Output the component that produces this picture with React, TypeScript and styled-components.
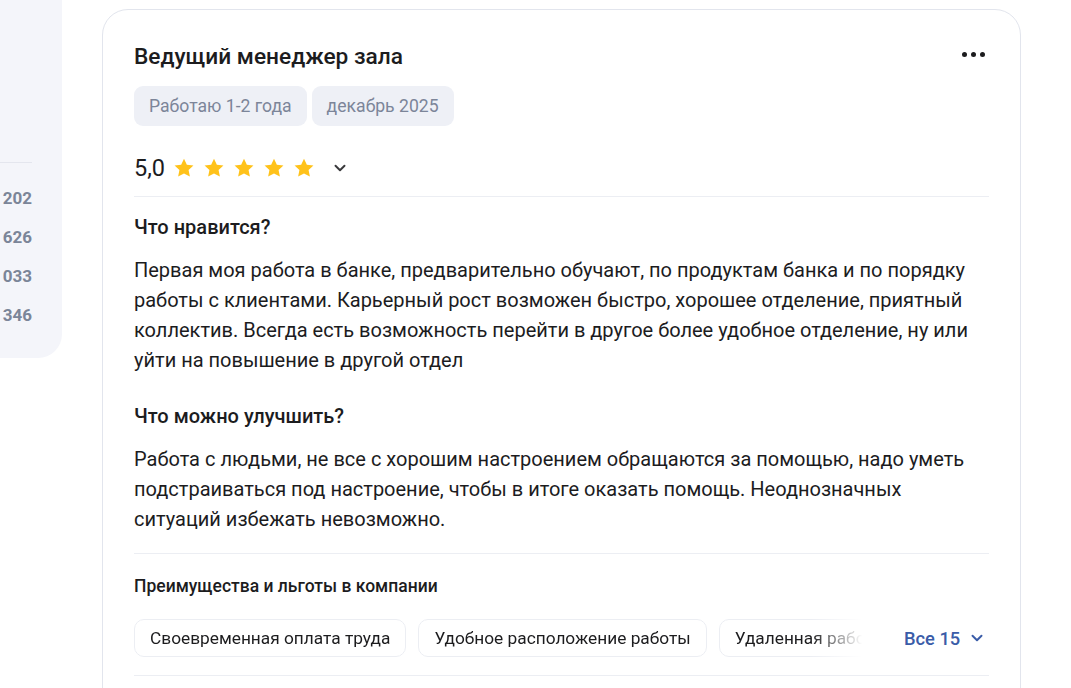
import React from "react";
import styled, { createGlobalStyle } from "styled-components";

const GlobalStyle = createGlobalStyle`
  html, body {
    margin: 0;
    padding: 0;
    background: #fff;
    font-family: Roboto, "Noto Sans", Arial, sans-serif;
    color: #1c1c1e;
    overflow: hidden;
  }
  * { box-sizing: border-box; }
`;

const Page = styled.div`
  display: flex;
  align-items: flex-start;
  width: 1071px;
  height: 688px;
  overflow: hidden;
`;

const SidePanel = styled.div`
  width: 62px;
  flex-shrink: 0;
  margin-top: -24px;
  height: 382px;
  background: #f4f5fa;
  border-radius: 0 24px 24px 0;
  padding: 186px 30px 0 0;
`;

const SideDivider = styled.div`
  height: 1px;
  background: #e4e6ee;
  margin-bottom: 25px;
`;

const SideRow = styled.div`
  display: flex;
  justify-content: flex-end;
  font-size: 17px;
  line-height: 20px;
  font-weight: 700;
  color: #7b8598;
  margin-bottom: 19px;
`;

const Card = styled.div`
  margin-left: 40px;
  margin-top: 9px;
  width: 919px;
  height: 720px;
  border: 1px solid #e2e5ed;
  border-radius: 26px;
  padding: 33px 31px 0 31px;
`;

const HeaderRow = styled.div`
  display: flex;
  align-items: center;
  justify-content: space-between;
  height: 28px;
`;

const Title = styled.h2`
  margin: 0;
  font-size: 22.7px;
  line-height: 28px;
  font-weight: 500;
  color: #1c1c1e;
`;

const MoreButton = styled.div`
  display: flex;
  gap: 4px;
  margin-right: 4px;
  margin-top: -6px;
  span {
    width: 5px;
    height: 5px;
    border-radius: 50%;
    background: #1c1c1e;
  }
`;

const Tags = styled.div`
  display: flex;
  gap: 5px;
  margin-top: 15px;
`;

const Tag = styled.div`
  height: 40px;
  padding: 0 15px;
  border-radius: 9px;
  background: #eef0f6;
  color: #7c8599;
  font-size: 17.6px;
  display: flex;
  align-items: center;
`;

const RatingRow = styled.div`
  display: flex;
  align-items: center;
  height: 36px;
  margin-top: 24px;
`;

const Score = styled.span`
  font-size: 23.5px;
  font-weight: 400;
  margin-right: 8px;
`;

const Stars = styled.div`
  display: flex;
  gap: 8px;
`;

const Divider = styled.div<{ $top: number }>`
  height: 1px;
  background: #eceef3;
  margin-top: ${(p) => p.$top}px;
`;

const SectionTitle = styled.h3<{ $top: number }>`
  margin: ${(p) => p.$top}px 0 0 0;
  font-size: 20px;
  line-height: 24px;
  font-weight: 500;
`;

const Text = styled.p`
  margin: 16px 0 0 0;
  font-size: 20px;
  line-height: 30px;
  color: #1c1c1e;
`;

const BenefitsTitle = styled.h4`
  margin: 21px 0 0 0;
  font-size: 17.5px;
  line-height: 22px;
  font-weight: 500;
`;

const BenefitsRow = styled.div`
  display: flex;
  align-items: center;
  margin-top: 22px;
`;

const BenefitsTrack = styled.div`
  display: flex;
  flex: 0 0 728px;
  gap: 12px;
  overflow: hidden;
  mask-image: linear-gradient(to right, #000 93%, transparent 100%);
  -webkit-mask-image: linear-gradient(to right, #000 93%, transparent 100%);
`;

const Benefit = styled.div`
  flex-shrink: 0;
  height: 38px;
  padding: 0 15px;
  border: 1px solid #eceef3;
  border-radius: 10px;
  display: flex;
  align-items: center;
  font-size: 17.3px;
  color: #1c1c1e;
  white-space: nowrap;
`;

const ShowAll = styled.div`
  display: flex;
  flex-shrink: 0;
  align-items: center;
  gap: 8px;
  margin-left: 42px;
  color: #3a5ca8;
  font-size: 18.3px;
  font-weight: 500;
  white-space: nowrap;
`;

const ChevronWrap = styled.span`
  display: flex;
  margin-left: 16px;
`;

const Star = () => (
  <svg width="22" height="22" viewBox="0 0 24 24">
    <path
      d="M12 1.8l3.1 6.6 7.2.9-5.3 5 1.4 7.1L12 17.9l-6.4 3.5 1.4-7.1-5.3-5 7.2-.9z"
      fill="#ffc21a"
    />
  </svg>
);

const Chevron = ({ color, size }: { color: string; size: number }) => (
  <svg width={size} height={size} viewBox="0 0 24 24" fill="none">
    <path d="M6 9l6 6 6-6" stroke={color} strokeWidth="2.6" strokeLinecap="round" strokeLinejoin="round" />
  </svg>
);

const sideNumbers = ["202", "626", "033", "346"];
const benefits = ["Своевременная оплата труда", "Удобное расположение работы", "Удаленная работа"];

export default function App() {
  return (
    <>
      <GlobalStyle />
      <Page>
        <SidePanel>
          <SideDivider />
          {sideNumbers.map((n) => (
            <SideRow key={n}>{n}</SideRow>
          ))}
        </SidePanel>

        <Card>
          <HeaderRow>
            <Title>Ведущий менеджер зала</Title>
            <MoreButton>
              <span />
              <span />
              <span />
            </MoreButton>
          </HeaderRow>

          <Tags>
            <Tag>Работаю 1-2 года</Tag>
            <Tag>декабрь 2025</Tag>
          </Tags>

          <RatingRow>
            <Score>5,0</Score>
            <Stars>
              {[0, 1, 2, 3, 4].map((i) => (
                <Star key={i} />
              ))}
            </Stars>
            <ChevronWrap>
              <Chevron color="#3a3a3c" size={18} />
            </ChevronWrap>
          </RatingRow>

          <Divider $top={10} />

          <SectionTitle $top={18}>Что нравится?</SectionTitle>
          <Text>
            Первая моя работа в банке, предварительно обучают, по продуктам банка и по порядку работы с клиентами.
            Карьерный рост возможен быстро, хорошее отделение, приятный коллектив. Всегда есть возможность перейти в
            другое более удобное отделение, ну или уйти на повышение в другой отдел
          </Text>

          <SectionTitle $top={29}>Что можно улучшить?</SectionTitle>
          <Text>
            Работа с людьми, не все с хорошим настроением обращаются за помощью, надо уметь подстраиваться под
            настроение, чтобы в итоге оказать помощь. Неоднозначных ситуаций избежать невозможно.
          </Text>

          <Divider $top={19} />

          <BenefitsTitle>Преимущества и льготы в компании</BenefitsTitle>
          <BenefitsRow>
            <BenefitsTrack>
              {benefits.map((b) => (
                <Benefit key={b}>{b}</Benefit>
              ))}
            </BenefitsTrack>
            <ShowAll>
              Все 15
              <Chevron color="#3a5ca8" size={18} />
            </ShowAll>
          </BenefitsRow>

          <Divider $top={18} />
        </Card>
      </Page>
    </>
  );
}
